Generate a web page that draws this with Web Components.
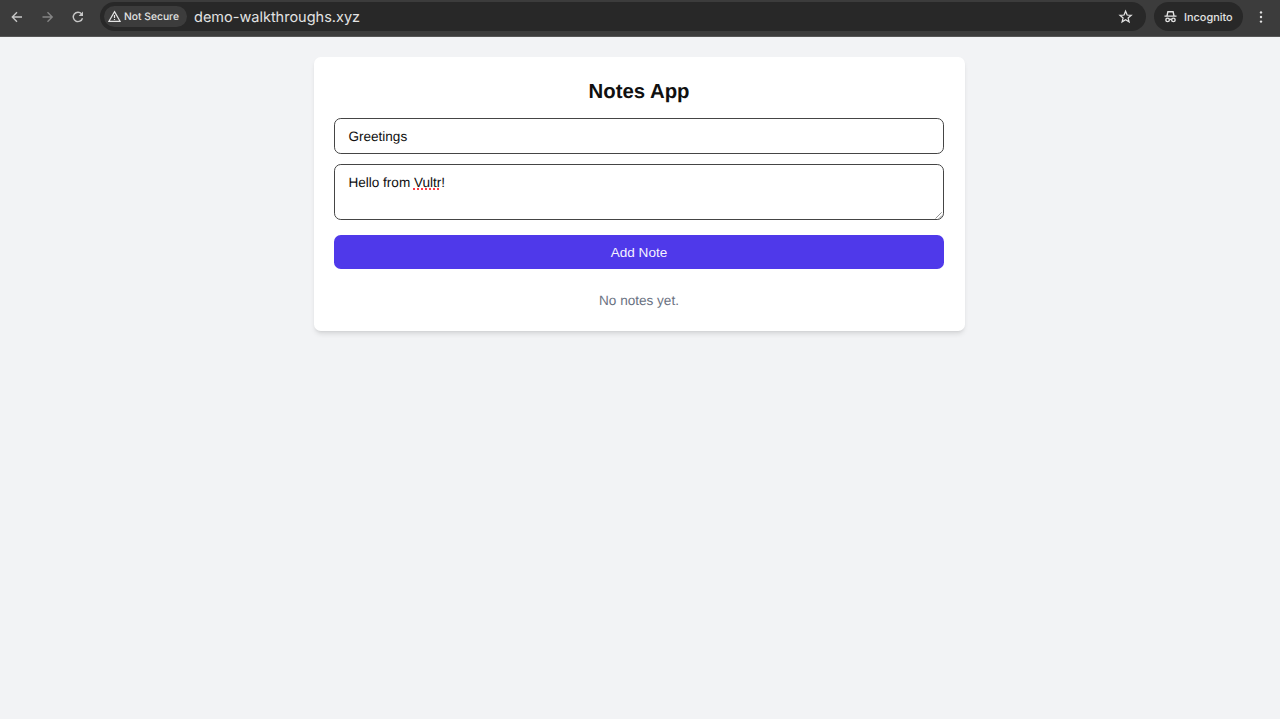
<!DOCTYPE html>
<html lang="en">
<head>
<meta charset="utf-8">
<title>Notes App</title>
<style>
  body {
    margin: 0;
    height: 719px;
    overflow: hidden;
    background-color: #f2f3f5;
    font-family: "Liberation Sans", Arial, sans-serif;
    font-size: 13.57px;
    line-height: 20.35px;
    color: #101010;
    text-rendering: geometricPrecision;
  }
</style>
</head>
<body>
<browser-bar address="demo-walkthroughs.xyz"></browser-bar>
<notes-card heading="Notes App">
  <note-field>Greetings</note-field>
  <note-field multiline>Hello from <spell-error>Vultr</spell-error>!</note-field>
  <note-button>Add Note</note-button>
  <span slot="empty">No notes yet.</span>
</notes-card>

<script>
const BROWSER_BAR_TEMPLATE = document.createElement('template');
BROWSER_BAR_TEMPLATE.innerHTML = `
  <style>
    :host {
      display: flex;
      align-items: center;
      box-sizing: border-box;
      height: 37px;
      padding: 0 10px 3px 8px;
      background-color: #3c3c3c;
      border-bottom: 1px solid #565656;
      font-family: Inter, sans-serif;
      color: #e3e3e3;
    }

    svg {
      display: block;
      flex: none;
      fill: none;
      stroke: currentColor;
      stroke-width: 1.4;
    }

    .bar__nav {
      display: flex;
      gap: 12.5px;
      width: 92px;
      color: #c7c7c7;
    }

    .bar__nav .disabled {
      color: #858585;
    }

    .bar__address {
      display: flex;
      align-items: center;
      flex: 1;
      box-sizing: border-box;
      height: 29px;
      padding: 0 12px 0 4px;
      border-radius: 15px;
      background-color: #282828;
    }

    .bar__security {
      display: flex;
      align-items: center;
      gap: 3px;
      box-sizing: border-box;
      width: 83px;
      height: 21px;
      padding-left: 4px;
      border-radius: 11px;
      background-color: #3c3c3c;
      font-size: 10.3px;
      font-weight: 500;
      white-space: nowrap;
    }

    .bar__security span,
    .bar__profile span {
      padding-top: 1px;
    }

    .bar__url {
      flex: 1;
      margin-left: 7px;
      padding-top: 3px;
      font-size: 14.5px;
    }

    .bar__profile {
      display: flex;
      align-items: center;
      gap: 6.5px;
      box-sizing: border-box;
      width: 89px;
      height: 29px;
      margin: 0 9px 0 8px;
      padding-left: 9.5px;
      border-radius: 15px;
      background-color: #282828;
      font-size: 10.9px;
      font-weight: 500;
    }

    .bar__menu {
      fill: currentColor;
      stroke: none;
    }
  </style>

  <div class="bar__nav">
    <svg width="18" height="18" viewBox="0 0 18 18"><path d="M14 9H4.5M9 4.3L4.3 9L9 13.7"/></svg>
    <svg class="disabled" width="18" height="18" viewBox="0 0 18 18"><path d="M3.5 9H13M8.5 4.3L13.2 9L8.5 13.7"/></svg>
    <svg width="18" height="18" viewBox="0 0 18 18"><path d="M13.5 10.2A4.7 4.7 0 1 1 12.6 5.9"/><path d="M14 3.6V8H9.6Z" fill="currentColor" stroke="none"/></svg>
  </div>
  <div class="bar__address">
    <div class="bar__security">
      <svg width="13" height="13" viewBox="0 0 13 13" style="stroke-width:1.2"><path d="M6.5 1.6L12 11.3H1ZM6.5 5V8M6.5 8.9V10"/></svg>
      <span>Not Secure</span>
    </div>
    <span class="bar__url"></span>
    <svg width="16" height="16" viewBox="0 0 16 16" style="stroke-width:1.25"><path d="M7.6 2.2L9.15 6L13.2 6.3L10.1 8.9L11.1 12.9L7.6 10.7L4.1 12.9L5.1 8.9L2 6.3L6.05 6Z"/></svg>
  </div>
  <div class="bar__profile">
    <svg width="14" height="14" viewBox="0 0 14 14" style="stroke-width:1.4"><path d="M.5 6.1H12.5M3 5.9L3.9 1.7H9.1L10 5.9M5.4 9.6Q6.5 8.8 7.6 9.6"/><circle cx="3.6" cy="9.9" r="1.75"/><circle cx="9.4" cy="9.9" r="1.75"/></svg>
    <span>Incognito</span>
  </div>
  <svg class="bar__menu" width="18" height="18" viewBox="0 0 18 18"><circle cx="9" cy="4.4" r="1.2"/><circle cx="9" cy="9" r="1.2"/><circle cx="9" cy="13.6" r="1.2"/></svg>
`;

class BrowserBar extends HTMLElement {
  constructor() {
    super();

    this.attachShadow({ mode: 'open' });
    this.shadowRoot.appendChild(BROWSER_BAR_TEMPLATE.content.cloneNode(true));

    this.shadowRoot.querySelector('.bar__url').textContent = this.getAttribute('address');
  }
}

const NOTES_CARD_TEMPLATE = document.createElement('template');
NOTES_CARD_TEMPLATE.innerHTML = `
  <style>
    :host {
      display: block;
      box-sizing: border-box;
      width: 651px;
      height: 273.5px;
      margin: 20.3px 0 0 313.5px;
      padding: 20.3px;
      border-radius: 6.8px;
      background-color: #fff;
      box-shadow: 0 3.4px 5px -1px rgba(0, 0, 0, .1), 0 1.7px 3.4px -2px rgba(0, 0, 0, .1);
    }

    h1 {
      margin: 0 0 12.6px;
      padding-top: 1px;
      font-size: 20.35px;
      line-height: 27.1px;
      text-align: center;
    }

    .card__empty {
      margin-top: 21.4px;
      color: #6a7282;
      text-align: center;
    }
  </style>

  <h1></h1>
  <slot></slot>
  <div class="card__empty"><slot name="empty"></slot></div>
`;

class NotesCard extends HTMLElement {
  constructor() {
    super();

    this.attachShadow({ mode: 'open' });
    this.shadowRoot.appendChild(NOTES_CARD_TEMPLATE.content.cloneNode(true));

    this.shadowRoot.querySelector('h1').textContent = this.getAttribute('heading');
  }
}

const NOTE_FIELD_TEMPLATE = document.createElement('template');
NOTE_FIELD_TEMPLATE.innerHTML = `
  <style>
    :host {
      display: block;
      position: relative;
      box-sizing: border-box;
      height: 35.5px;
      margin-bottom: 10.2px;
      padding: 7.3px 13.6px 0;
      border: 1px solid #454545;
      border-radius: 6.8px;
    }

    :host([multiline]) {
      height: 56px;
      margin-bottom: 15.5px;
      padding-top: 7.8px;
    }

    svg {
      display: none;
      position: absolute;
      right: 0;
      bottom: 0;
      stroke: #777;
      stroke-width: .8;
    }

    :host([multiline]) svg {
      display: block;
    }
  </style>

  <slot></slot>
  <svg width="8" height="8" viewBox="0 0 8 8"><path d="M.5 7.5L6.7 1.3M4 7.5L7 4.5"/></svg>
`;

class NoteField extends HTMLElement {
  constructor() {
    super();

    this.attachShadow({ mode: 'open' });
    this.shadowRoot.appendChild(NOTE_FIELD_TEMPLATE.content.cloneNode(true));
  }
}

const SPELL_ERROR_TEMPLATE = document.createElement('template');
SPELL_ERROR_TEMPLATE.innerHTML = `
  <style>
    :host {
      display: inline;
      text-decoration: underline dotted #ff3b47 1.5px;
      text-decoration-skip-ink: none;
      text-underline-offset: 1.5px;
    }
  </style><slot></slot>`;

class SpellError extends HTMLElement {
  constructor() {
    super();

    this.attachShadow({ mode: 'open' });
    this.shadowRoot.appendChild(SPELL_ERROR_TEMPLATE.content.cloneNode(true));
  }
}

const NOTE_BUTTON_TEMPLATE = document.createElement('template');
NOTE_BUTTON_TEMPLATE.innerHTML = `
  <style>
    :host {
      display: block;
    }

    button {
      display: block;
      width: 100%;
      height: 34px;
      padding: 1.5px 0 0;
      border: 0;
      border-radius: 6.8px;
      background-color: #4f39ea;
      color: #f4f2ff;
      font: inherit;
    }
  </style>

  <button><slot></slot></button>
`;

class NoteButton extends HTMLElement {
  constructor() {
    super();

    this.attachShadow({ mode: 'open' });
    this.shadowRoot.appendChild(NOTE_BUTTON_TEMPLATE.content.cloneNode(true));
  }
}

window.customElements.define('browser-bar', BrowserBar);
window.customElements.define('notes-card', NotesCard);
window.customElements.define('note-field', NoteField);
window.customElements.define('spell-error', SpellError);
window.customElements.define('note-button', NoteButton);
</script>
</body>
</html>
